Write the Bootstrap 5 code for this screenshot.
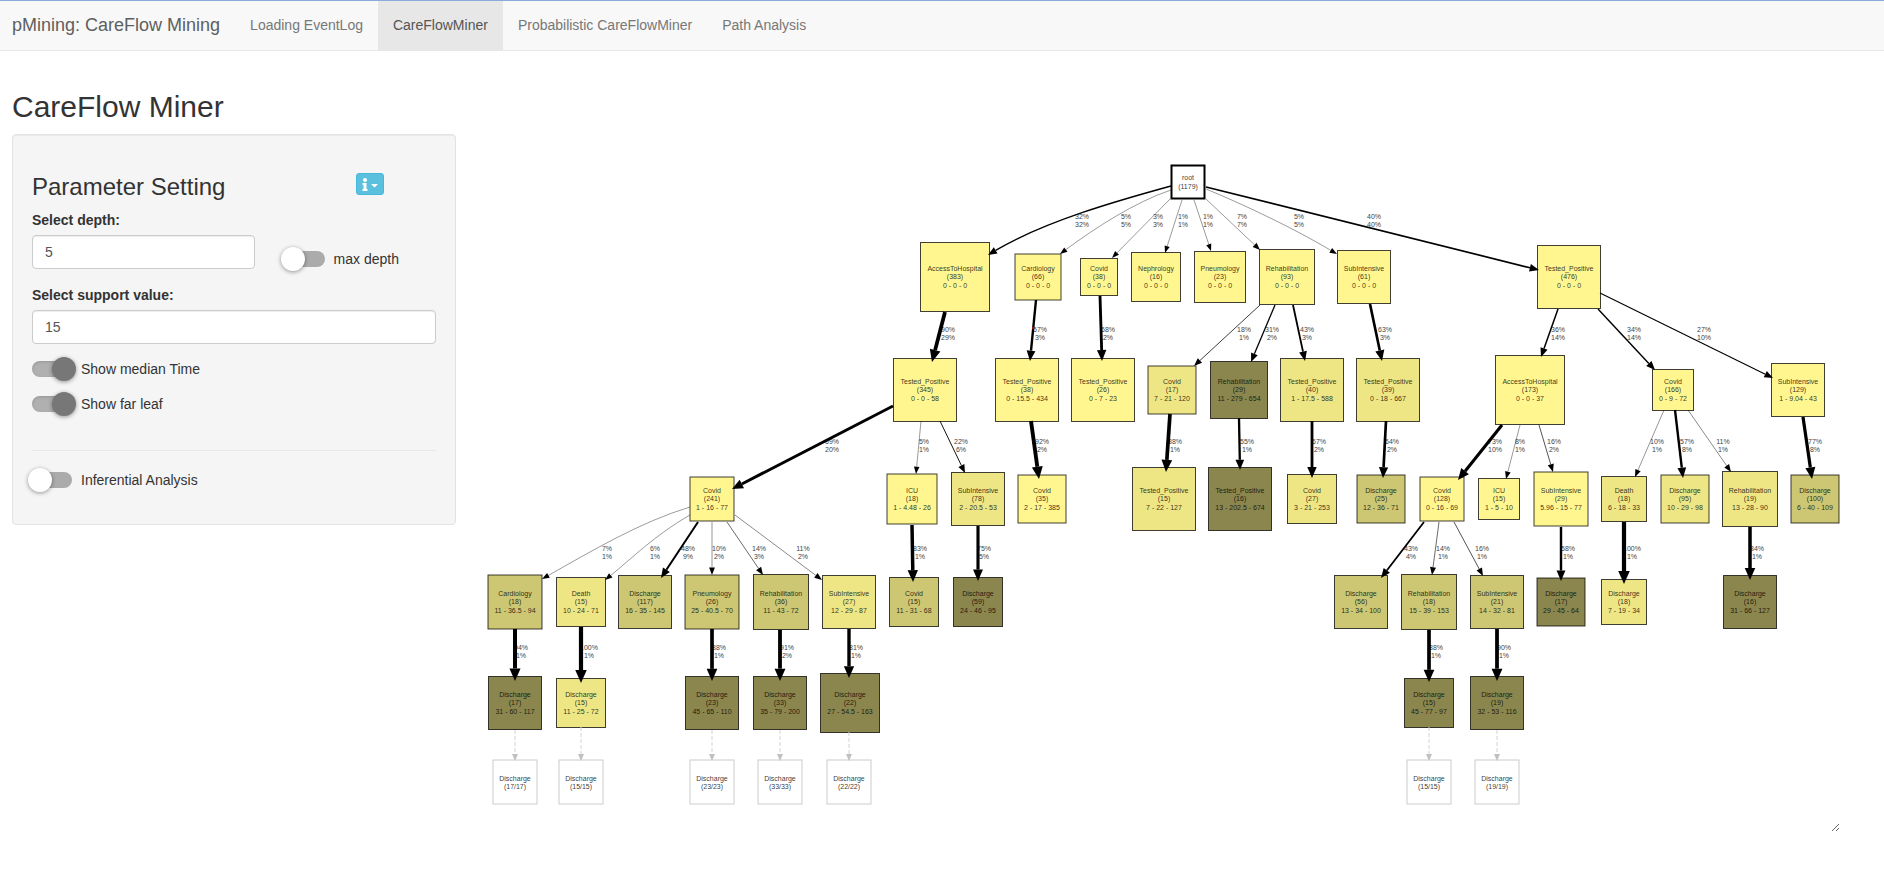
<!DOCTYPE html>
<html lang="en">
<head>
<meta charset="utf-8">
<meta name="viewport" content="width=device-width, initial-scale=1">
<title>pMining: CareFlow Mining</title>
<link href="https://cdn.jsdelivr.net/npm/bootstrap@5.3.0/dist/css/bootstrap.min.css" rel="stylesheet">
<style>
  body { font-family: "Liberation Sans", Arial, sans-serif; font-size: 14px; line-height: 20px; color: #333; }
  .topbar { background: #f8f8f8; border-top: 1px solid #8aa9dc; border-bottom: 1px solid #e7e7e7; padding: 0 12px; --bs-navbar-nav-link-padding-x: 15px; }
  .topbar .navbar-brand { font-size: 18px; line-height: 20px; color: #5e5e5e; margin-right: 15px; padding: 14px 0 15px; }
  .topbar .nav-link { color: #777; padding: 14px 15px 15px; }
  .topbar .nav-link.active { background: #e7e7e7; color: #555; }
  .page-title { font-size: 30px; line-height: 33px; margin: 39px 0 11px; }
  .layout-row { --bs-gutter-x: 28px; }
  .settings { background: #f5f5f5; border: 1px solid #e3e3e3; border-radius: 4px; padding: 38px 19px 34px; box-shadow: inset 0 1px 1px rgba(0,0,0,.05); }
  .settings h2 { font-size: 24px; line-height: 28px; margin: 0; }
  .settings-head { margin-bottom: 9px; padding-right: 52px; }
  .btn-help { background: #5bc0de; border: 1px solid #46b8da; border-radius: 3px; color: #fff; width: 28px; height: 22px; padding: 0; }
  .btn-help:hover { background: #31b0d5; color: #fff; }
  .settings .form-label { font-weight: 700; margin-bottom: 5px; }
  .settings .form-control { height: 34px; font-size: 14px; line-height: 20px; padding: 6px 12px; color: #555; border-color: #ccc; border-radius: 4px; box-shadow: inset 0 1px 1px rgba(0,0,0,.075); }
  .depth-grid { display: grid; grid-template-columns: 222fr 181fr; }
  .depth-grid .toggle { margin-left: 30px; }
  .toggle { display: flex; align-items: center; height: 20px; }
  .toggle label { margin-left: 9px; }
  .toggle input { appearance: none; flex: none; width: 40px; height: 16px; margin: 0; border-radius: 8px; background: #ababab; display: flex; align-items: center; }
  .toggle input::before { content: ""; flex: none; width: 24px; height: 24px; margin-left: -4px; border-radius: 50%; background: #fff; box-shadow: 0 1px 4px rgba(0,0,0,.4); }
  .toggle input:checked { background: #b0b0b0; box-shadow: inset 0 1px 3px rgba(0,0,0,.15); }
  .toggle input:checked::before { margin-left: 20px; background: #777; }
  .gap-after { margin-bottom: 15px; }
  .settings hr { margin: 36px 0 19px; border-top: 1px solid #e6e6e6; opacity: 1; }
  .flow-panel { margin-right: 32px; overflow: hidden; resize: both; }
  .flow-panel svg { display: block; width: 100%; height: auto; font-family: "Liberation Sans", Arial, sans-serif; font-size: 7px; text-anchor: middle; }
  .node-box { stroke: #000; stroke-opacity: .75; stroke-width: 1; }
  .node-text { fill: #000; fill-opacity: .8; }
  .edge-text { fill: #444; }
  .leaf-box { fill: #fff; stroke: #ccc; stroke-width: 1; }
  .root-box { fill: #fff; stroke: #000; stroke-width: 2; }
  .leaf-line { stroke: #d3d3d3; stroke-width: 1; stroke-dasharray: 4 2; }
</style>
</head>
<body>
<nav class="navbar navbar-expand topbar">
  <a class="navbar-brand" href="#">pMining: CareFlow Mining</a>
  <ul class="navbar-nav">
    <li class="nav-item"><a class="nav-link" href="#">Loading EventLog</a></li>
    <li class="nav-item"><a class="nav-link active" aria-current="page" href="#">CareFlowMiner</a></li>
    <li class="nav-item"><a class="nav-link" href="#">Probabilistic CareFlowMiner</a></li>
    <li class="nav-item"><a class="nav-link" href="#">Path Analysis</a></li>
  </ul>
</nav>

<main class="container-fluid">
  <h1 class="page-title">CareFlow Miner</h1>
  <div class="row layout-row align-items-start">
    <div class="col-3">
      <form class="settings">
        <div class="settings-head d-flex justify-content-between align-items-start">
          <h2>Parameter Setting</h2>
          <button type="button" class="btn btn-help d-flex align-items-center justify-content-center" aria-label="Info">
            <svg width="17" height="13" viewBox="0 0 17 13" fill="#fff" aria-hidden="true"><circle cx="3" cy="2" r="2"/><path d="M0.5 5H4.5V11H5.5V13H0.500V11H1.500V7H0.500ZM9 6H16L12.500 9.500Z"/></svg>
          </button>
        </div>
        <div class="depth-grid mb-3">
          <div>
            <label class="form-label" for="depth">Select depth:</label>
            <input class="form-control" id="depth" type="text" value="5">
          </div>
          <div class="d-flex align-items-end">
            <div class="toggle"><input type="checkbox" role="switch" id="maxdepth"><label for="maxdepth">max depth</label></div>
          </div>
        </div>
        <label class="form-label" for="support">Select support value:</label>
        <input class="form-control gap-after" id="support" type="text" value="15">
        <div class="toggle gap-after"><input type="checkbox" role="switch" id="median" checked><label for="median">Show median Time</label></div>
        <div class="toggle"><input type="checkbox" role="switch" id="farleaf" checked><label for="farleaf">Show far leaf</label></div>
        <hr>
        <div class="toggle"><input type="checkbox" role="switch" id="inferential"><label for="inferential">Inferential Analysis</label></div>
      </form>
    </div>
    <div class="col-9">
      <div class="flow-panel">
        <svg id="flow" viewBox="484 134 1356 698" aria-label="CareFlow graph"></svg>
      </div>
    </div>
  </div>
</main>

<script>
// node levels: centre line y, then [centre x, side, khaki shade, event, patients, min - median - max days]
const shades = ['', '#fff68f', '#eee685', '#cdc673', '#8b864e'];
const levels = [
  [277, [
    [955,69,1,'AccessToHospital',383,'0 - 0 - 0'], [1038,46,1,'Cardiology',66,'0 - 0 - 0'], [1099,37,1,'Covid',38,'0 - 0 - 0'],
    [1156,49,1,'Nephrology',16,'0 - 0 - 0'], [1220,51,1,'Pneumology',23,'0 - 0 - 0'], [1287,55,1,'Rehabilitation',93,'0 - 0 - 0'],
    [1364,53,1,'SubIntensive',61,'0 - 0 - 0'], [1569,63,1,'Tested_Positive',476,'0 - 0 - 0']]],
  [390, [
    [925,63,1,'Tested_Positive',345,'0 - 0 - 58'], [1027,63,1,'Tested_Positive',38,'0 - 15.5 - 434'], [1103,63,1,'Tested_Positive',26,'0 - 7 - 23'],
    [1172,48,2,'Covid',17,'7 - 21 - 120'], [1239,57,4,'Rehabilitation',29,'11 - 279 - 654'], [1312,63,2,'Tested_Positive',40,'1 - 17.5 - 588'],
    [1388,63,2,'Tested_Positive',39,'0 - 18 - 667'], [1530,69,1,'AccessToHospital',173,'0 - 0 - 37'], [1673,41,1,'Covid',166,'0 - 9 - 72'],
    [1798,53,1,'SubIntensive',129,'1 - 9.04 - 43']]],
  [499, [
    [712,44,1,'Covid',241,'1 - 16 - 77'], [912,50,1,'ICU',18,'1 - 4.48 - 26'], [978,53,2,'SubIntensive',78,'2 - 20.5 - 53'],
    [1042,48,1,'Covid',35,'2 - 17 - 385'], [1164,63,2,'Tested_Positive',15,'7 - 22 - 127'], [1240,63,4,'Tested_Positive',16,'13 - 202.5 - 674'],
    [1312,49,2,'Covid',27,'3 - 21 - 253'], [1381,48,3,'Discharge',25,'12 - 36 - 71'], [1442,44,1,'Covid',128,'0 - 16 - 69'],
    [1499,41,1,'ICU',15,'1 - 5 - 10'], [1561,54,1,'SubIntensive',29,'5.96 - 15 - 77'], [1624,45,2,'Death',18,'6 - 18 - 33'],
    [1685,48,2,'Discharge',95,'10 - 29 - 98'], [1750,55,2,'Rehabilitation',19,'13 - 28 - 90'], [1815,48,3,'Discharge',100,'6 - 40 - 109']]],
  [602, [
    [515,54,3,'Cardiology',18,'11 - 36.5 - 94'], [581,49,2,'Death',15,'10 - 24 - 71'], [645,53,3,'Discharge',117,'16 - 35 - 145'],
    [712,54,3,'Pneumology',26,'25 - 40.5 - 70'], [781,55,3,'Rehabilitation',36,'11 - 43 - 72'], [849,53,2,'SubIntensive',27,'12 - 29 - 87'],
    [914,49,3,'Covid',15,'11 - 31 - 68'], [978,49,4,'Discharge',59,'24 - 46 - 95'], [1361,53,3,'Discharge',56,'13 - 34 - 100'],
    [1429,55,3,'Rehabilitation',18,'15 - 39 - 153'], [1497,53,3,'SubIntensive',21,'14 - 32 - 81'], [1561,48,4,'Discharge',17,'29 - 45 - 64'],
    [1624,45,2,'Discharge',18,'7 - 19 - 34'], [1750,53,4,'Discharge',16,'31 - 66 - 127']]],
  [703, [
    [515,53,4,'Discharge',17,'31 - 60 - 117'], [581,49,2,'Discharge',15,'11 - 25 - 72'], [712,53,4,'Discharge',23,'45 - 65 - 110'],
    [780,53,4,'Discharge',33,'35 - 79 - 200'], [850,59,4,'Discharge',22,'27 - 54.5 - 163'], [1429,49,4,'Discharge',15,'45 - 77 - 97'],
    [1497,53,4,'Discharge',19,'32 - 53 - 116']]]
];
// edges per level: label y, then [x1, y1, x2, y2, % of parent, % of total, label x, optional curve controls]
const links = [
  [219, [
    [1171,186,988,255,32,32,1082,'1120 200 1045 221'], [1171,190,1060,254,5,5,1126,'1135 202 1095 228'], [1170,199,1112,258,3,3,1158],
    [1182,200,1165,253,1,1,1183], [1194,200,1211,251,1,1,1208], [1206,199,1260,250,7,7,1242],
    [1206,189,1337,254,5,5,1299,'1245 205 1295 229'], [1206,187,1539,270,40,40,1374]]],
  [332, [
    [945,312,932,362,90,29,948], [1036,300,1030,361,57,3,1040], [1100,296,1102,361,68,2,1108], [1260,305,1194,366,18,1,1244],
    [1275,305,1251,362,31,2,1272], [1293,305,1305,361,43,3,1307], [1370,304,1382,361,63,3,1385], [1558,309,1541,357,36,14,1558],
    [1598,309,1655,370,34,14,1634], [1600,293,1773,378,27,10,1704]]],
  [444, [
    [893,406,732,489,69,20,832], [921,421,916,474,5,1,924], [940,421,965,473,22,6,961], [1031,421,1039,479,92,2,1042],
    [1170,414,1166,472,88,1,1175], [1239,418,1240,470,55,1,1247], [1312,421,1312,478,67,2,1319], [1386,421,1383,478,64,2,1392],
    [1502,425,1458,480,73,10,1495], [1520,425,1506,479,8,1,1520], [1539,425,1553,472,16,2,1554], [1664,410,1635,477,10,1,1657],
    [1675,410,1683,478,57,8,1687], [1688,410,1731,472,11,1,1723], [1803,417,1812,479,77,8,1815]]],
  [551, [
    [690,507,542,579,7,1,607,'640 522 590 552'], [690,515,605,580,6,1,655,'655 535 630 560'], [698,522,661,578,48,9,688],
    [712,522,712,575,10,2,719], [727,522,763,575,14,3,759], [735,515,822,580,11,2,803], [912,525,913,582,83,1,920],
    [978,526,978,581,75,5,984], [1424,522,1381,578,43,4,1411], [1439,522,1432,575,14,1,1443], [1454,522,1483,576,16,1,1482],
    [1561,527,1561,581,58,1,1568], [1624,522,1624,584,100,1,1632], [1750,527,1750,580,84,1,1757]]],
  [650, [
    [515,629,515,681,94,1,521], [581,627,581,683,100,1,589], [712,629,712,681,88,1,719], [780,630,780,681,91,2,787],
    [849,629,849,678,81,1,856], [1429,630,1429,682,88,1,1436], [1497,629,1497,681,90,1,1504]]]
];
const leaves = [[515,730,17],[581,727,15],[712,730,23],[780,730,33],[849,732,22],[1429,727,15],[1497,730,19]];

const box = (x, y, s, cls, fill) => `<rect class="${cls}" x="${x - s / 2}" y="${y - s / 2}" width="${s}" height="${s}"${fill ? ` fill="${fill}"` : ''}/>`;
const word = (x, y, t, cls) => `<text class="${cls}" x="${x}" y="${y}">${t}</text>`;
let nodes = box(1188, 182, 33, 'root-box') + word(1188, 180, 'root', 'node-text') + word(1188, 189, '(1179)', 'node-text');
let labels = '', lines = '';

for (const [cy, row] of levels)
  for (const [x, s, shade, name, n, time] of row)
    nodes += box(x, cy, s, 'node-box', shades[shade]) + word(x, cy - 6, name, 'node-text') + word(x, cy + 2, `(${n})`, 'node-text') + word(x, cy + 11, time, 'node-text');

function arrow(x1, y1, x2, y2, w, curve) {
  const c = curve ? curve.split(' ').map(Number) : null;
  const [fx, fy] = c ? [c[2], c[3]] : [x1, y1];
  const d = Math.hypot(x2 - fx, y2 - fy), ux = (x2 - fx) / d, uy = (y2 - fy) / d;
  const len = 7 + w * 1.4, half = 2.6 + w * .75, bx = x2 - ux * len, by = y2 - uy * len;
  const path = c ? `M${x1} ${y1}C${c.join(' ')} ${bx} ${by}` : `M${x1} ${y1}L${bx} ${by}`;
  return `<path d="${path}" fill="none" stroke="#000" stroke-width="${Math.max(w, .4)}"/>` +
    `<path d="M${x2} ${y2}L${bx - uy * half} ${by + ux * half}L${bx + uy * half} ${by - ux * half}Z"/>`;
}
for (const [ly, row] of links)
  for (const [x1, y1, x2, y2, p, q, lx, curve] of row) {
    labels += word(lx, ly, p + '%', 'edge-text') + word(lx, ly + 8, q + '%', 'edge-text');
    lines += arrow(x1, y1, x2, y2, p * .042, curve);
  }
for (const [x, y, n] of leaves) {
  nodes += box(x, 782, 44, 'leaf-box') + word(x, 781, 'Discharge', 'node-text') + word(x, 789, `(${n}/${n})`, 'node-text');
  lines += `<path class="leaf-line" d="M${x} ${y}V754"/><path fill="#c0c0c0" d="M${x} 761l-3-7h6Z"/>`;
}
document.getElementById('flow').innerHTML = nodes + labels + lines + '<circle cx="1033" cy="328" r="1" fill="#e00"/>';
</script>
<script src="https://cdn.jsdelivr.net/npm/bootstrap@5.3.0/dist/js/bootstrap.bundle.min.js"></script>
</body>
</html>
